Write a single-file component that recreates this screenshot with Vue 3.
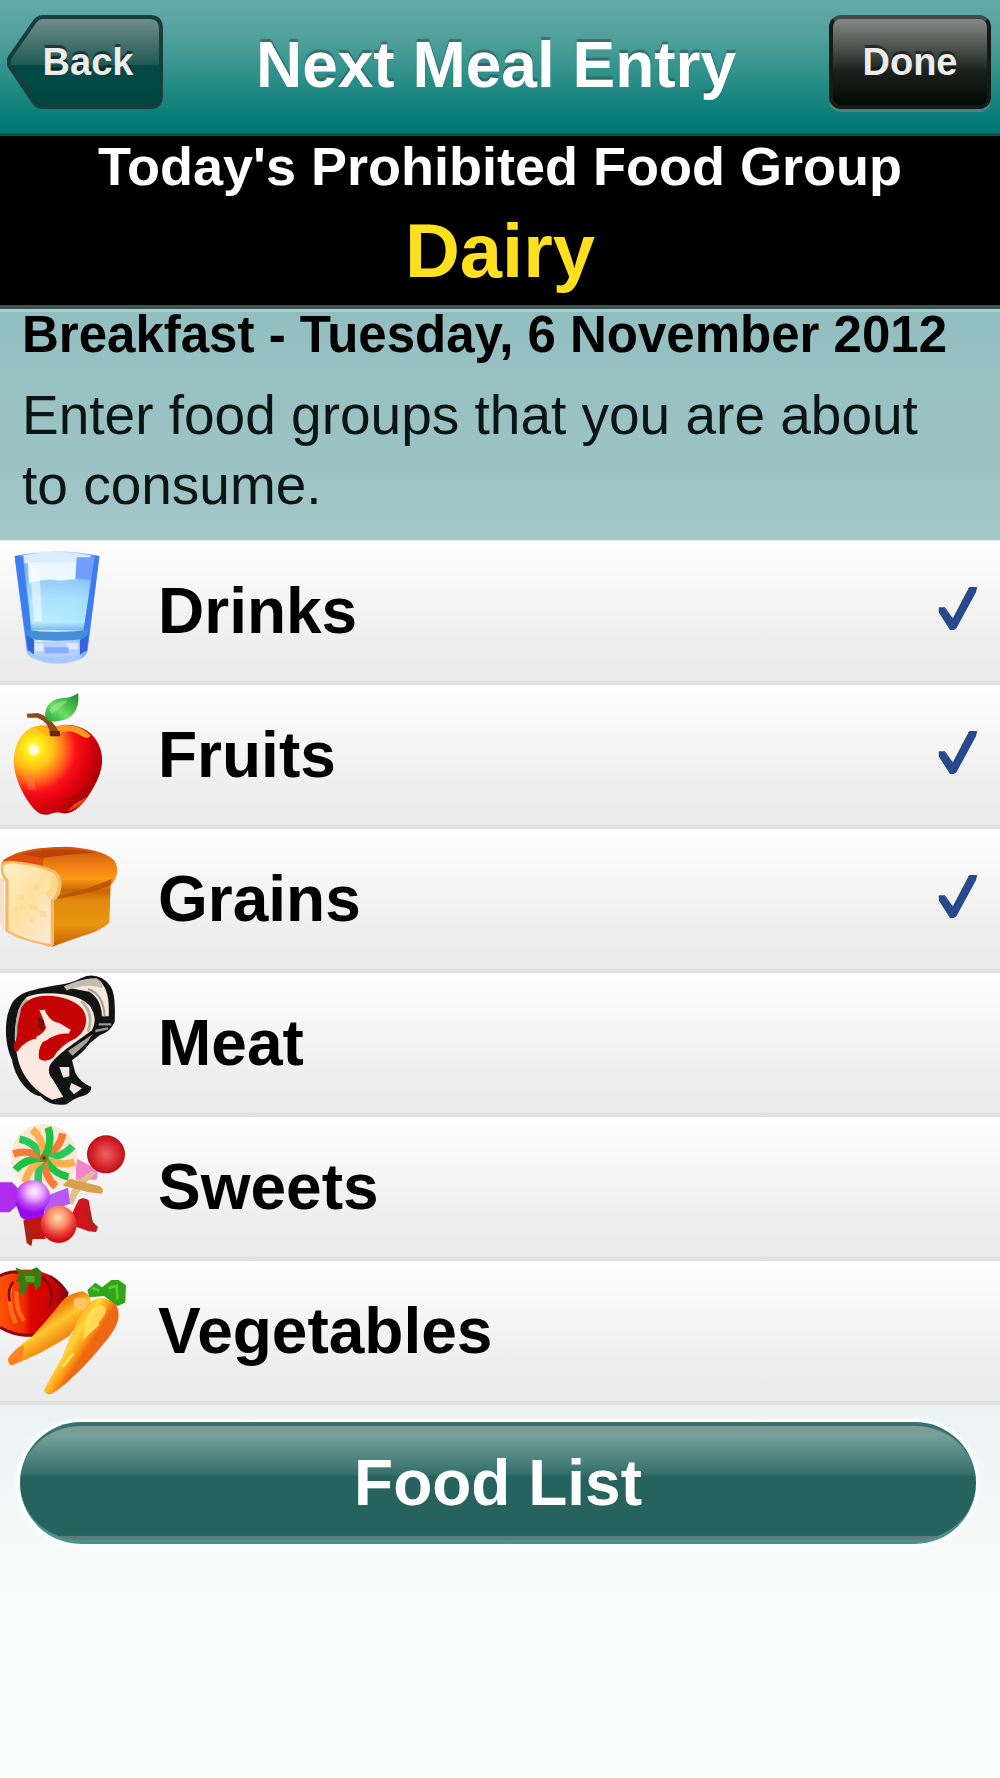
<template>
  <main class="screen">
    <header class="nav-bar">
      <button class="nav-button back" type="button">
        <svg class="back-shape" viewBox="0 0 158 94" preserveAspectRatio="none" aria-hidden="true">
          <defs>
            <linearGradient id="backFill" x1="0" y1="0" x2="0" y2="1">
              <stop offset="0" stop-color="#738f8c" />
              <stop offset="0.53" stop-color="#1f5b56" />
              <stop offset="0.54" stop-color="#014b45" />
              <stop offset="1" stop-color="#014640" />
            </linearGradient>
          </defs>
          <path
            d="M36 2 H145 Q156 2 156 14 V80 Q156 92 145 92 H36 Q31 92 27 87 L3 52 Q0 47 3 42 L27 8 Q31 2 36 2 Z"
            fill="url(#backFill)" stroke="#163f3c" stroke-width="4"
          />
        </svg>
        <span class="back-label">Back</span>
      </button>
      <h1 class="nav-title">Next Meal Entry</h1>
      <button class="nav-button done" type="button">Done</button>
    </header>

    <section class="prohibited">
      <h2 class="prohibited-title">Today's Prohibited Food Group</h2>
      <p class="prohibited-group">Dairy</p>
    </section>

    <section class="meal">
      <h2 class="meal-title">Breakfast - Tuesday, 6 November 2012</h2>
      <p class="meal-hint">Enter food groups that you are about to consume.</p>
    </section>

    <ul class="groups">
      <li v-for="group in groups" :key="group.id">
        <label class="group-row" :for="group.id">
          <svg class="group-icon" viewBox="0 0 420 432" aria-hidden="true">
            <!-- glass of water -->
            <g v-if="group.id === 'drinks'" transform="translate(0 -3)">
              <defs>
                <linearGradient id="glass" x1="0" y1="0" x2="1" y2="0">
                  <stop offset="0" stop-color="#3b6fe8" />
                  <stop offset="0.16" stop-color="#8fc4fb" />
                  <stop offset="0.3" stop-color="#d9effe" />
                  <stop offset="0.7" stop-color="#a9d4fd" />
                  <stop offset="0.88" stop-color="#6ea6fb" />
                  <stop offset="1" stop-color="#3b68e0" />
                </linearGradient>
                <linearGradient id="water" x1="0" y1="0" x2="0" y2="1">
                  <stop offset="0" stop-color="#8fc6fb" />
                  <stop offset="0.4" stop-color="#a9e2ff" />
                  <stop offset="0.85" stop-color="#b4ebff" />
                  <stop offset="1" stop-color="#6fb4ee" />
                </linearGradient>
              </defs>
              <path d="M44 54 Q170 26 298 54 L262 340 Q255 374 170 378 Q88 374 80 340 Z" fill="url(#glass)" />
              <path d="M70 52 Q170 32 272 52 L266 76 Q170 90 74 76 Z" fill="#dcecff" />
              <path d="M84 74 H228 V128 L88 150 Z" fill="#eef6ff" />
              <path d="M230 58 H284 L276 124 H226 Z" fill="#719dfc" />
              <path d="M62 150 Q110 118 180 128 Q240 118 280 130 L262 276 H82 Z" fill="url(#water)" opacity="0.9" />
              <path d="M44 56 H68 L86 200 L100 344 L82 336 Z" fill="#397ff0" />
              <path d="M298 56 H284 L262 200 L240 348 L262 338 Z" fill="#3f7bf0" />
              <path d="M90 90 H118 L126 250 H102 Z" fill="#fff" opacity="0.55" />
              <path d="M80 276 Q170 288 264 276 L260 302 Q170 314 82 302 Z" fill="#458fd9" />
              <path d="M80 292 L102 306 V350 L84 336 Z M264 292 L240 306 V350 L260 336 Z" fill="#3462dc" />
              <path d="M104 312 H236 V352 Q170 364 104 352 Z" fill="#b5d0ff" />
              <path d="M104 316 H130 V340 H104 Z M200 316 H234 V334 H200 Z" fill="#e1ebff" />
              <path d="M134 328 H206 V346 H134 Z" fill="#86adfa" />
              <path d="M96 350 Q170 362 248 350 Q236 374 170 376 Q108 374 96 350 Z" fill="#a8c8fd" />
            </g>

            <!-- apple -->
            <g v-else-if="group.id === 'fruits'">
              <defs>
                <radialGradient id="apple" cx="0.22" cy="0.26" r="0.86">
                  <stop offset="0" stop-color="#fffbb0" />
                  <stop offset="0.1" stop-color="#ffef1c" />
                  <stop offset="0.26" stop-color="#ffc316" />
                  <stop offset="0.42" stop-color="#ff6a1c" />
                  <stop offset="0.56" stop-color="#fb101c" />
                  <stop offset="0.76" stop-color="#d8000c" />
                  <stop offset="1" stop-color="#970002" />
                </radialGradient>
                <linearGradient id="leaf" x1="0" y1="1" x2="1" y2="0">
                  <stop offset="0" stop-color="#1ba129" />
                  <stop offset="0.4" stop-color="#71dc6a" />
                  <stop offset="1" stop-color="#128d23" />
                </linearGradient>
              </defs>
              <path
                d="M160 136 C190 116 250 124 280 160 C318 206 312 262 280 314 C252 366 216 398 184 390 C160 384 150 400 126 394 C96 386 54 314 44 262 C34 202 58 146 100 132 C126 124 146 126 160 136 Z"
                fill="url(#apple)"
              />
              <path d="M160 132 C200 118 246 128 272 158 Q262 170 246 160 Q210 134 176 152 Z" fill="#fb9a22" />
              <path d="M110 134 Q140 128 150 156 Q136 164 120 146 Z" fill="#ffb90e" />
              <path d="M296 208 C304 262 262 342 178 350 C250 366 302 294 296 208 Z" fill="#a80006" opacity="0.65" />
              <path d="M200 386 Q244 374 262 340 Q250 348 224 362 Z" fill="#e94318" />
              <path d="M80 92 L112 90 Q158 104 180 154 L152 158 Q148 118 112 104 L82 104 Z" fill="#8b491c" />
              <path d="M148 144 H180 V160 H150 Z" fill="#682509" />
              <path d="M136 104 C132 58 166 44 200 44 C216 42 226 36 234 30 C240 68 226 110 174 114 C154 118 144 116 136 104 Z" fill="url(#leaf)" />
              <path d="M148 80 Q168 56 204 52 Q184 74 156 94 Z" fill="#a4eb91" opacity="0.55" />
              <circle cx="102" cy="202" r="16" fill="#fffde6" opacity="0.85" />
              <path d="M72 270 H100 L108 320 H84 Z" fill="#ff8a4a" opacity="0.4" />
            </g>

            <!-- loaf -->
            <g v-else-if="group.id === 'grains'" transform="translate(0 3)">
              <defs>
                <linearGradient id="crust" x1="0" y1="0" x2="0" y2="1">
                  <stop offset="0" stop-color="#c9540c" />
                  <stop offset="0.2" stop-color="#ef8212" />
                  <stop offset="0.32" stop-color="#fa9a13" />
                  <stop offset="0.44" stop-color="#c96404" />
                  <stop offset="0.54" stop-color="#e18a0f" />
                  <stop offset="0.78" stop-color="#e9950f" />
                  <stop offset="1" stop-color="#c45f03" />
                </linearGradient>
                <linearGradient id="crumb" x1="0" y1="0" x2="1" y2="1">
                  <stop offset="0" stop-color="#fff1c6" />
                  <stop offset="0.45" stop-color="#fee1a0" />
                  <stop offset="1" stop-color="#fbeadb" />
                </linearGradient>
              </defs>
              <path
                d="M4 104 C40 64 120 58 198 56 C260 60 316 70 344 98 C358 124 352 150 332 172 L328 284 Q300 310 240 326 L156 356 L130 330 L30 150 Z"
                fill="url(#crust)"
              />
              <path d="M8 98 Q40 72 150 70 Q120 96 130 116 Z" fill="#de4d0d" />
              <path d="M60 78 Q170 52 290 74 Q200 78 130 90 Z" fill="#bd4109" />
              <path d="M180 202 Q260 186 334 154 L332 172 Q264 200 172 212 Z" fill="#ba5704" />
              <path
                d="M2 110 Q14 94 46 100 Q120 106 168 130 Q194 152 180 196 Q172 212 162 220 V350 Q150 362 128 350 Q54 336 16 310 V160 Q0 142 2 110 Z"
                fill="#f3ba6d"
              />
              <path
                d="M10 114 Q26 102 54 108 Q120 116 160 136 Q180 156 168 194 Q162 210 152 214 V348 Q76 336 26 308 V156 Q8 140 10 114 Z"
                fill="url(#crumb)"
              />
              <path d="M148 214 L168 190 Q180 160 160 138 L150 150 Q160 176 138 196 Z" fill="#fdd477" opacity="0.8" />
              <path d="M56 200 H72 V216 H56 Z M104 170 H118 V184 H104 Z M90 232 H112 V246 H90 Z M38 238 H52 V250 H38 Z M120 250 H138 V266 H120 Z M90 270 H104 V282 H90 Z" fill="#f8cd82" opacity="0.35" />
              <path d="M0 150 V260 Q2 300 12 306 V150 Z" fill="#fae0c5" />
            </g>

            <!-- joint of meat -->
            <g v-else-if="group.id === 'meat'" transform="translate(0 -24)">
              <path
                d="M98 82 C150 64 200 70 246 44 Q276 30 306 46 C338 68 348 86 344 176 Q332 206 300 216 L270 240 Q250 268 216 292 L226 330 Q240 358 274 372 Q274 390 252 398 Q222 404 200 424 Q150 432 122 400 C80 392 44 340 36 290 C12 240 10 160 40 114 Q64 88 98 82 Z"
                fill="#111412"
              />
              <path d="M190 72 L250 52 Q282 40 304 60 Q330 84 326 160 L306 160 Q304 108 268 86 Z" fill="#f5e8dc" />
              <path d="M192 70 Q250 44 290 46 Q314 60 306 76 Q266 58 200 82 Z" fill="#c4bcae" />
              <path d="M264 78 Q310 92 314 160" fill="none" stroke="#a39b90" stroke-width="6" />
              <path
                d="M80 102 Q120 84 190 94 Q252 104 272 132 Q294 170 276 202 L220 242 Q172 276 152 302 Q138 328 160 352 L190 402 L156 410 C100 382 60 336 50 270 C38 230 44 140 80 102 Z"
                fill="#fbeadf"
              />
              <path d="M82 110 Q48 130 50 228 M244 114 Q284 154 264 206" fill="none" stroke="#b7b2a4" stroke-width="9" />
              <path
                d="M64 134 Q86 98 140 98 Q214 100 248 138 Q276 186 230 224 Q180 246 160 284 Q136 300 118 288 Q110 260 136 224 Q80 222 52 266 Q42 268 40 246 Q54 226 52 190 Z"
                fill="#c50504"
              />
              <path d="M118 142 L134 140 Q148 176 178 180 L212 200 L206 212 Q176 210 148 226 Q122 248 108 222 Q132 210 138 194 Q130 166 118 142 Z" fill="#fbe9df" />
              <path d="M114 160 L132 172 V204 L116 194 Z" fill="#750e0a" />
              <path d="M204 264 L278 214 L260 240 L218 278 Z" fill="#a7a397" />
              <path d="M178 312 H208 V340 L190 344 Z M214 360 L246 376 L222 394 L208 378 Z" fill="#ede8dc" />
              <path d="M296 184 H334 M286 204 L324 196" stroke="#9b998b" stroke-width="7" />
            </g>

            <!-- lollipops and wrapped candy -->
            <g v-else-if="group.id === 'sweets'" transform="translate(0 -6)">
              <defs>
                <radialGradient id="pop">
                  <stop offset="0" stop-color="#e9666b" />
                  <stop offset="0.55" stop-color="#dc3036" />
                  <stop offset="1" stop-color="#bd1019" />
                </radialGradient>
                <radialGradient id="violet" cx="0.55" cy="0.35" r="0.65">
                  <stop offset="0" stop-color="#fff4ff" />
                  <stop offset="0.35" stop-color="#ecacfb" />
                  <stop offset="0.7" stop-color="#bc45f6" />
                  <stop offset="1" stop-color="#9910e8" />
                </radialGradient>
                <radialGradient id="red" cx="0.48" cy="0.32" r="0.65">
                  <stop offset="0" stop-color="#ffe0b0" />
                  <stop offset="0.4" stop-color="#fb8f6d" />
                  <stop offset="0.7" stop-color="#e93b35" />
                  <stop offset="1" stop-color="#cc080b" />
                </radialGradient>
              </defs>
              <path d="M228 136 L294 170 L290 200 H228 Z" fill="#f184cb" />
              <path d="M204 270 Q212 208 276 174 L288 180 Q240 220 218 276 Z" fill="#e3bd8b" />
              <path d="M190 192 L300 220 Q316 232 304 242 L266 238 L190 218 Z" fill="#d7a04e" />
              <circle cx="132" cy="133" r="100" fill="#fde8d6" />
              <g transform="translate(132 135)" fill="none" stroke-width="22">
                <path v-for="n in 12" :key="n" d="M0 0 Q28 -50 12 -92" :stroke="swirl[n % 4]" :transform="`rotate(${n * 30})`" />
                <circle r="9" fill="#4c3c10" stroke="#8a7a20" stroke-width="8" />
              </g>
              <circle cx="318" cy="124" r="57" fill="url(#pop)" />
              <path d="M0 208 L36 208 L58 230 V272 L28 298 H0 Z" fill="#af2cee" />
              <path d="M136 250 L204 224 L210 272 L170 288 L134 300 Z" fill="#b75af3" />
              <path d="M46 270 L136 270 L130 324 Q86 334 62 312 Z" fill="#9709ee" />
              <ellipse cx="98" cy="250" rx="52" ry="48" fill="url(#violet)" />
              <path d="M70 322 L136 310 L136 378 L98 378 L94 400 L80 390 Z" fill="#be1712" />
              <path d="M214 306 L236 260 Q250 250 266 262 L278 326 L294 342 L288 358 L264 354 L214 336 Z" fill="#cf151b" />
              <path d="M84 344 L90 384 M262 290 L280 348" stroke="#923116" stroke-width="9" />
              <ellipse cx="176" cy="334" rx="54" ry="56" fill="url(#red)" />
            </g>

            <!-- tomato and carrots -->
            <g v-else-if="group.id === 'vegetables'" transform="translate(0 -3)">
              <defs>
                <linearGradient id="tomato" x1="0" y1="0" x2="1" y2="0">
                  <stop offset="0" stop-color="#ff5207" />
                  <stop offset="0.35" stop-color="#f22b04" />
                  <stop offset="0.45" stop-color="#dc0300" />
                  <stop offset="0.75" stop-color="#cd0303" />
                  <stop offset="1" stop-color="#83000b" />
                </linearGradient>
                <linearGradient id="carrot" gradientUnits="userSpaceOnUse" x1="210" y1="190" x2="284" y2="238">
                  <stop offset="0" stop-color="#f7a319" />
                  <stop offset="0.45" stop-color="#ffd53a" />
                  <stop offset="0.75" stop-color="#fca117" />
                  <stop offset="1" stop-color="#ee6812" />
                </linearGradient>
                <linearGradient id="carrotBack" gradientUnits="userSpaceOnUse" x1="116" y1="188" x2="160" y2="254">
                  <stop offset="0" stop-color="#ef810e" />
                  <stop offset="0.45" stop-color="#fec730" />
                  <stop offset="1" stop-color="#f48b13" />
                </linearGradient>
              </defs>
              <path d="M0 54 Q40 30 98 36 Q170 46 206 104 L196 146 L110 232 Q58 246 0 208 Z" fill="url(#tomato)" />
              <path d="M32 84 Q20 140 48 196 M50 100 Q44 150 72 188" fill="none" stroke="#ff7920" stroke-width="13" opacity="0.8" />
              <path d="M126 58 Q168 88 148 148 M40 72 Q20 94 30 130" fill="none" stroke="#8a0609" stroke-width="8" />
              <path d="M0 54 Q30 38 56 44 M0 208 Q50 238 106 230 M150 56 Q186 76 200 110" fill="none" stroke="#870713" stroke-width="9" />
              <path d="M46 28 L78 42 L110 28 L126 42 L122 82 L106 98 L100 74 L84 80 L74 110 L56 104 L60 74 L46 70 L58 52 Z" fill="#3b7913" />
              <path d="M74 54 H104 V72 H78 Z" fill="#55a51f" />
              <path
                d="M24 302 Q42 272 92 240 Q150 178 184 132 Q208 104 248 100 Q280 112 270 146 L208 234 Q128 286 36 322 Q24 320 24 302 Z"
                fill="url(#carrotBack)"
              />
              <path d="M24 302 Q42 274 72 262 L66 304 L38 322 Q24 320 24 302 Z" fill="#ff7420" opacity="0.8" />
              <path d="M222 122 Q248 112 268 132 L254 156 Q232 158 222 142 Z" fill="#ffc465" />
              <path
                d="M132 396 Q162 340 188 294 Q212 230 238 180 Q262 122 306 120 Q356 128 356 170 Q356 204 312 256 Q240 346 168 400 Q140 420 132 396 Z"
                fill="url(#carrot)"
              />
              <path d="M256 196 Q266 150 302 142 Q328 144 312 174 Q280 216 248 250 Z" fill="#ffe667" opacity="0.75" />
              <path d="M188 326 L220 286 M268 222 L296 196" stroke="#ffe15a" stroke-width="9" />
              <path d="M262 96 L286 74 L306 88 L334 66 L356 66 L378 82 L376 134 L352 144 L312 114 L268 118 Z" fill="#33a519" />
              <path d="M276 90 L298 98 M326 90 L350 84 L352 124" fill="none" stroke="#57cd33" stroke-width="8" />
            </g>
          </svg>
          <span class="group-name">{{ group.name }}</span>
          <input :id="group.id" v-model="group.selected" class="group-check" type="checkbox" />
        </label>
      </li>
    </ul>

    <footer class="actions">
      <button class="food-list" type="button">Food List</button>
    </footer>
  </main>
</template>

<script setup>
import { ref } from 'vue'

const groups = ref([
  { id: 'drinks', name: 'Drinks', selected: true },
  { id: 'fruits', name: 'Fruits', selected: true },
  { id: 'grains', name: 'Grains', selected: true },
  { id: 'meat', name: 'Meat', selected: false },
  { id: 'sweets', name: 'Sweets', selected: false },
  { id: 'vegetables', name: 'Vegetables', selected: false }
])

// stripe colours of the lollipop
const swirl = ['#1fc142', '#f77b35', '#27c95c', '#fbb04f']
</script>

<style>
body {
  margin: 0;
}
</style>

<style scoped>
.screen {
  min-height: 100vh;
  display: flex;
  flex-direction: column;
  background: #fafcfb;
  font-family: "Liberation Sans", Arial, sans-serif;
  color: #000;
}

h1,
h2,
p,
ul {
  margin: 0;
  padding: 0;
}

button {
  font-family: inherit;
  font-weight: bold;
  border: none;
  padding: 0;
  cursor: pointer;
}

.nav-bar {
  display: flex;
  align-items: flex-start;
  padding: 15px 9px 18px 7px;
  border-bottom: 3px solid #045550;
  background: linear-gradient(#64aaa7, #4fa09b 30%, #007972 94%);
}

.nav-button {
  position: relative;
  height: 94px;
  font-size: 38px;
  line-height: 94px;
  color: #ececec;
  text-shadow: 0 -3px 1px rgba(0, 0, 0, 0.5);
}

.back {
  width: 156px;
  background: none;
}

.back-shape {
  position: absolute;
  inset: 0;
  width: 100%;
  height: 100%;
}

.back-label {
  position: relative;
  padding-left: 6px;
}

.done {
  width: 162px;
  border: 4px solid #151b18;
  border-top-color: #444846;
  border-radius: 12px;
  line-height: 86px;
  background: linear-gradient(#858885, #454b47 38%, #1c211d 60%, #020a04);
  box-shadow: 0 3px 0 #4a8580;
}

.nav-title {
  flex: 1;
  text-align: center;
  font-size: 64px;
  line-height: 100px;
  color: #fff;
  text-shadow: 0 -3px 1px rgba(50, 80, 78, 0.6);
}

.prohibited {
  border-bottom: 4px solid #405353;
  background: #000;
  text-align: center;
  font-weight: bold;
}

.prohibited-title {
  font-size: 54px;
  line-height: 60px;
  color: #fff;
}

.prohibited-group {
  font-size: 76px;
  line-height: 109px;
  color: #ffe01f;
}

.meal {
  padding: 0 22px 20px;
  border-top: 3px solid #a1d1d2;
  background: linear-gradient(#93bebf, #a2c7c8);
}

.meal-title {
  font-size: 51px;
  line-height: 46px;
  padding-bottom: 22px;
}

.meal-hint {
  font-size: 55px;
  line-height: 70px;
  color: #0c1515;
}

.groups {
  list-style: none;
  padding: 1px 0;
  background: #edf4f3;
}

.group-row {
  box-sizing: border-box;
  height: 144px;
  display: flex;
  align-items: center;
  padding-right: 22px;
  border-bottom: 4px solid #e1e1e1;
  background: linear-gradient(#fefefe, #f4f4f4 45%, #ebebeb 90%);
  cursor: pointer;
}

.group-icon {
  width: 140px;
  height: 144px;
  flex-shrink: 0;
}

.group-name {
  flex: 1;
  padding-left: 18px;
  font-size: 64px;
  line-height: 72px;
  font-weight: bold;
}

.group-check {
  appearance: none;
  width: 40px;
  height: 44px;
  margin: 0 0 4px;
}

.group-check:checked {
  background: #27488a;
  clip-path: polygon(2% 46%, 17% 46%, 37% 71%, 78% 0, 98% 0, 95% 12%, 46% 94%, 40% 98%, 30% 98%, 2% 58%);
}

.actions {
  flex: 1;
  padding: 16px 24px 24px 20px;
  background: linear-gradient(#eaf3f2, #f6faf9 130px, #fafcfb 240px);
}

.food-list {
  width: 100%;
  height: 122px;
  border-top: 4px solid #38716d;
  border-bottom: 4px solid #4c918c;
  border-radius: 61px;
  background: linear-gradient(#7b9b98, #77a09c 8%, #326e69 43%, #26635e 44%, #26635e 96%, #607c79 97%);
  box-shadow: 0 0 4px 3px #fff;
  font-size: 64px;
  line-height: 114px;
  color: #fff;
}
</style>
